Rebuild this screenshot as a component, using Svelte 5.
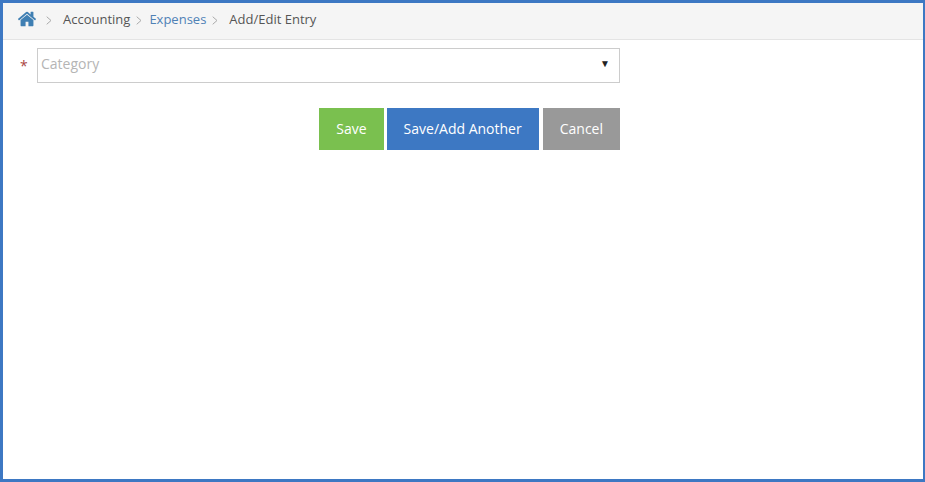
<script lang="ts">
	let category = $state('');
</script>

{#snippet chevron()}
	<svg class="sep" viewBox="0 0 6 9" width="6" height="9">
		<path d="M0.7 0.7 L5 4.5 L0.7 8.3" fill="none" stroke="#aaa" stroke-width="1" />
	</svg>
{/snippet}

<div class="frame">
	<nav class="crumbs">
		<a class="home" href="#top" aria-label="Home">
			<svg viewBox="0 0 1792 1792" width="20" height="20">
				<path
					fill="#3f7fb3"
					d="M1472 992v480q0 26-19 45t-45 19h-384v-384h-256v384h-384q-26 0-45-19t-19-45v-480q0-1 .5-3t.5-3l575-474 575 474q1 2 1 6zm223-69l-62 74q-8 9-21 11h-3q-13 0-21-7l-692-577-692 577q-12 8-24 7-13-2-21-11l-62-74q-8-10-7-23.5t11-21.5l719-599q32-26 76-26t76 26l244 204v-195q0-14 9-23t23-9h192q14 0 23 9t9 23v408l219 182q10 8 11 21.5t-7 23.5z"
				/>
			</svg>
		</a>
		<span class="step first">{@render chevron()}</span>
		<span class="crumb">Accounting</span>
		<span class="step">{@render chevron()}</span>
		<a class="crumb link" href="#top">Expenses</a>
		<span class="step wide">{@render chevron()}</span>
		<span class="crumb">Add/Edit Entry</span>
	</nav>

	<form class="form" onsubmit={(e) => e.preventDefault()}>
		<div class="field">
			<span class="req">*</span>
			<div class="select">
				<span class="placeholder">{category || 'Category'}</span>
				<span class="arrow">▼</span>
			</div>
		</div>
		<div class="actions">
			<button class="btn save" type="submit">Save</button>
			<button class="btn another" type="button">Save/Add Another</button>
			<button class="btn cancel" type="button">Cancel</button>
		</div>
	</form>
</div>

<style>
	:global(body) {
		margin: 0;
		background: #fff;
	}
	.frame {
		box-sizing: border-box;
		height: 482px;
		border: 3px solid #3d78c3;
		border-right-width: 2px;
		font-family: 'Open Sans', sans-serif;
		font-size: 13px;
		color: #555;
	}
	.crumbs {
		box-sizing: border-box;
		height: 37px;
		display: flex;
		align-items: center;
		padding: 0 0 4px 14px;
		background: #f5f5f5;
		border-bottom: 1px solid #e4e4e4;
	}
	.home {
		display: flex;
		width: 20px;
		height: 20px;
	}
	.step {
		display: flex;
		margin: 2px 7px 0 6px;
	}
	.step.first {
		margin: 2px 11px 0 9px;
	}
	.step.wide {
		margin-right: 11px;
	}
	.crumb {
		text-decoration: none;
		color: #555;
	}
	.link {
		color: #4f81b5;
	}
	.form {
		width: 617px;
	}
	.field {
		display: flex;
		align-items: center;
		margin-top: 8px;
	}
	.req {
		width: 34px;
		padding-left: 17px;
		box-sizing: border-box;
		color: #a94442;
		font-size: 14px;
	}
	.select {
		box-sizing: border-box;
		flex: 1;
		height: 35px;
		display: flex;
		align-items: center;
		justify-content: space-between;
		padding: 0 9px 4px 3px;
		border: 1px solid #ccc;
	}
	.placeholder {
		font-size: 14px;
		color: #b5b5b5;
	}
	.arrow {
		font-size: 10px;
		color: #222;
		margin-bottom: 1px;
	}
	.actions {
		display: flex;
		justify-content: flex-end;
		margin-top: 25px;
	}
	.btn {
		height: 42px;
		border: none;
		padding: 0 17px 2px;
		color: #fff;
		font: inherit;
		font-size: 14px;
	}
	.save {
		background: #7ac04f;
		margin-right: 3px;
	}
	.another {
		background: #3d78c3;
		margin-right: 4px;
	}
	.cancel {
		background: #999;
	}
</style>
